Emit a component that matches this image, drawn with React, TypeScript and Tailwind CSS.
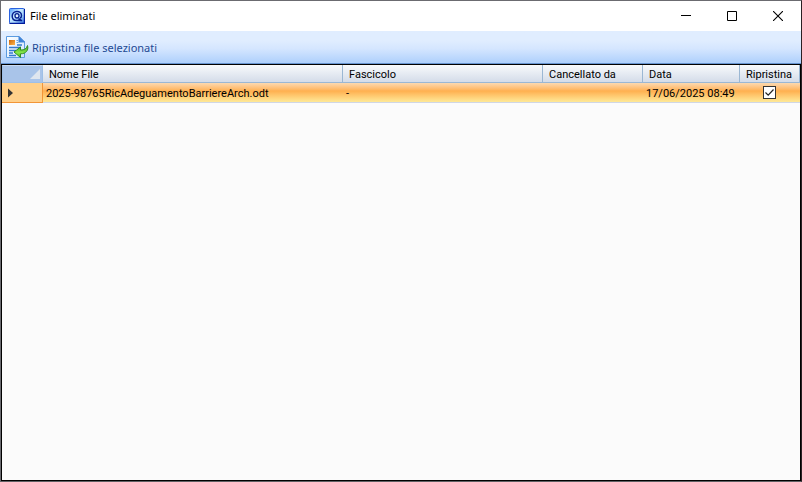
import { useState } from "react";

type DeletedFile = {
  name: string;
  folder: string;
  deletedBy: string;
  date: string;
};

const files: DeletedFile[] = [
  {
    name: "2025-98765RicAdeguamentoBarriereArch.odt",
    folder: "-",
    deletedBy: "",
    date: "17/06/2025 08:49",
  },
];

function AppLogo() {
  return (
    <svg width="16" height="16" viewBox="0 0 16 16" aria-hidden="true">
      <defs>
        <linearGradient id="logo" x1="0" y1="0" x2="1" y2="1">
          <stop offset="0" stopColor="#4f9cff" />
          <stop offset="0.4" stopColor="#c4e8ff" />
          <stop offset="0.65" stopColor="#a5d6ff" />
          <stop offset="1" stopColor="#2e6be0" />
        </linearGradient>
      </defs>
      <rect x="0.5" y="0.5" width="15" height="15" rx="1" fill="url(#logo)" stroke="#2a62e0" />
      <path d="M.5 15.5h15V1" fill="none" stroke="#001a9c" strokeWidth="1.4" />
      <path
        d="M13 12.800 9.500 10.500M12.300 12.500H7.500C4.800 12.500 3.200 10.500 3.200 8c0-2.700 2-4.600 4.700-4.600S12.500 5.200 12.500 7.400c0 1.500-.7 2.400-1.500 2.600"
        fill="none"
        stroke="#06208f"
        strokeWidth="1.500"
      />
      <ellipse cx="8" cy="7.800" rx="2" ry="2.200" fill="#e2f4ff" stroke="#06208f" strokeWidth="1.300" />
    </svg>
  );
}

function RestoreIcon() {
  return (
    <svg width="24" height="24" viewBox="0 0 24 24" aria-hidden="true">
      <defs>
        <linearGradient id="page" x1="0" y1="0" x2="1" y2="1">
          <stop offset="0" stopColor="#ffffff" />
          <stop offset="1" stopColor="#cfe4fa" />
        </linearGradient>
        <linearGradient id="arrow" x1="0" y1="0" x2="0" y2="1">
          <stop offset="0" stopColor="#3c9c22" />
          <stop offset="0.6" stopColor="#86e84a" />
          <stop offset="1" stopColor="#42b81c" />
        </linearGradient>
        <linearGradient id="photo" x1="0" y1="0" x2="1" y2="1">
          <stop offset="0" stopColor="#c8640c" />
          <stop offset="1" stopColor="#ffb54a" />
        </linearGradient>
      </defs>
      <path d="M1.500 1.500H14l5.500 5.500v15.500h-18z" fill="url(#page)" stroke="#5b9be0" />
      <path d="M14 1.500v5.500h5.500z" fill="#3f83d8" stroke="#3f83d8" />
      <rect x="4" y="5" width="6" height="5" fill="url(#photo)" />
      <path d="M11.500 5.500h1.500M11.500 7.500h2" stroke="#6aa3e2" />
      <path d="M12 10h5M4 12.500h12M4 15.500h7M4 18h4M4 20.500h7" stroke="#3479d0" strokeWidth="1.500" />
      <path
        d="M22.500 10.500c1 3.500-.2 6-3 7.500-1.200.6-2.500.8-4 .8V22.500L9 17l6.500-5v3c3.800.2 6-1.300 7-4.500z"
        fill="url(#arrow)"
        stroke="#268715"
        strokeWidth="0.900"
      />
    </svg>
  );
}

function TitleBar() {
  const button = "flex h-[30px] w-[46px] items-center justify-center hover:bg-gray-200";
  return (
    <header className="flex h-[30px] shrink-0 items-center bg-white pl-2">
      <AppLogo />
      <h1 className="ml-[5px] flex-1 font-['Noto_Sans','Open_Sans',sans-serif] text-[11px] leading-4 text-black">
        File eliminati
      </h1>
      <div className="flex">
        <button type="button" aria-label="Riduci a icona" className={button}>
          <svg width="10" height="10" viewBox="0 0 10 10" stroke="#000">
            <path d="M0 4.500h10" />
          </svg>
        </button>
        <button type="button" aria-label="Ingrandisci" className={button}>
          <svg width="10" height="10" viewBox="0 0 10 10" stroke="#000" fill="none">
            <path d="M.5.5h9v9h-9z" />
          </svg>
        </button>
        <button type="button" aria-label="Chiudi" className={button}>
          <svg width="10" height="10" viewBox="0 0 10 10" stroke="#000" strokeWidth="1.100">
            <path d="M0 0l10 10M10 0L0 10" />
          </svg>
        </button>
      </div>
    </header>
  );
}

const headCell =
  "h-[18px] border-r border-b border-[#9bb7d3] bg-linear-to-b from-[#f8fafc] to-[#d4dce9] pt-0.5 pl-1.5 text-left font-normal";
const bodyCell = "h-5 border-b border-[#d0d7e5] pt-px pl-[3px] whitespace-nowrap";

export default function App() {
  const [restore, setRestore] = useState<boolean[]>(files.map(() => true));

  return (
    <div className="flex h-screen flex-col border border-t-[#6b6b70] border-r-[#2a2024] border-b-[#606064] border-l-[#6b6b70] bg-white">
      <TitleBar />
      <div className="flex h-[33px] shrink-0 items-center border-b border-[#6593cf] bg-linear-to-b from-[#e0edff] from-30% via-[#d5e6ff] via-55% to-[#aed0fc] pl-1">
        <button
          type="button"
          className="flex items-center gap-[3px] font-['Noto_Sans','Open_Sans',sans-serif] text-[11px] leading-4 text-[#1e4a94]"
        >
          <RestoreIcon />
          <span className="pt-0.5">Ripristina file selezionati</span>
        </button>
      </div>
      <main className="min-h-0 flex-1 overflow-auto border border-black bg-[#fbfbfb]">
        <table className="w-full table-fixed border-separate border-spacing-0 font-[Roboto,'Liberation_Sans',sans-serif] text-[11px] leading-[15px] text-black">
          <colgroup>
            <col className="w-[41px]" />
            <col className="w-[300px]" />
            <col className="w-[200px]" />
            <col className="w-[100px]" />
            <col className="w-[97px]" />
            <col />
          </colgroup>
          <thead>
            <tr>
              <td className="border border-[#9ebfe6] border-t-[#c9dbf3] bg-[#a9c4e9] pr-0.5">
                <svg width="10" height="10" viewBox="0 0 10 10" className="ml-auto" aria-hidden="true">
                  <path d="M10 0v10H0z" fill="#dfe6ef" />
                </svg>
              </td>
              <th scope="col" className={headCell}>Nome File</th>
              <th scope="col" className={headCell}>Fascicolo</th>
              <th scope="col" className={headCell}>Cancellato da</th>
              <th scope="col" className={headCell}>Data</th>
              <th scope="col" className={headCell}>Ripristina</th>
            </tr>
          </thead>
          <tbody>
            {files.map((file, i) => (
              <tr
                key={file.name}
                className="bg-linear-to-b from-[#fcd9b0] from-0% via-[#ffb04f] via-40% to-[#fee997] to-95%"
              >
                <td className="h-5 border-r border-b border-[#f29536] bg-[#ffd08a] pl-1.5">
                  <svg width="6" height="10" viewBox="0 0 6 10" aria-hidden="true">
                    <path d="M0 .5v9L5 5z" fill="#333" />
                  </svg>
                </td>
                <td className={bodyCell}>{file.name}</td>
                <td className={bodyCell}>{file.folder}</td>
                <td className={bodyCell}>{file.deletedBy}</td>
                <td className={bodyCell}>{file.date}</td>
                <td className="h-5 border-b border-[#d0d7e5] pr-0.5">
                  <label className="relative mx-auto block size-[13px]">
                    <input
                      type="checkbox"
                      aria-label={`Ripristina ${file.name}`}
                      checked={restore[i]}
                      onChange={() => setRestore(restore.map((v, j) => (j === i ? !v : v)))}
                      className="peer block size-[13px] appearance-none border border-[#333] bg-white"
                    />
                    <svg
                      width="13"
                      height="13"
                      viewBox="0 0 13 13"
                      className="pointer-events-none invisible absolute inset-0 peer-checked:visible"
                      aria-hidden="true"
                    >
                      <path d="M2.500 6.500l2.700 2.700 5.300-5.700" fill="none" stroke="#222" strokeWidth="1.200" />
                    </svg>
                  </label>
                </td>
              </tr>
            ))}
          </tbody>
        </table>
      </main>
    </div>
  );
}
